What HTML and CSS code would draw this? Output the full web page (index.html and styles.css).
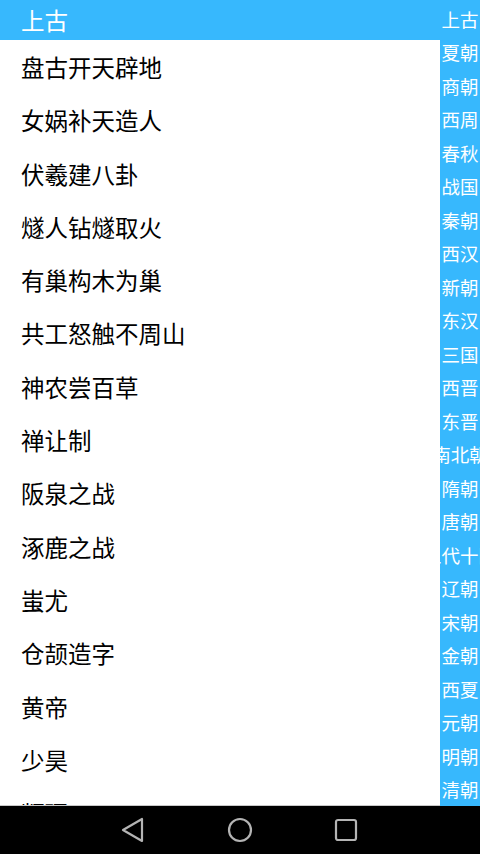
FILE: index.html
```html
<!DOCTYPE html>
<html lang="zh-CN">
<head>
<meta charset="utf-8">
<link rel="stylesheet" href="styles.css">
</head>
<body>
<div class="screen">
  <div class="app">
    <div class="main">
      <div class="header">上古</div>
      <div class="list">
        <div class="row">盘古开天辟地</div>
        <div class="row">女娲补天造人</div>
        <div class="row">伏羲建八卦</div>
        <div class="row">燧人钻燧取火</div>
        <div class="row">有巢构木为巢</div>
        <div class="row">共工怒触不周山</div>
        <div class="row">神农尝百草</div>
        <div class="row">禅让制</div>
        <div class="row">阪泉之战</div>
        <div class="row">涿鹿之战</div>
        <div class="row">蚩尤</div>
        <div class="row">仓颉造字</div>
        <div class="row">黄帝</div>
        <div class="row">少昊</div>
        <div class="row">颛顼</div>
      </div>
    </div>
    <div class="side">
      <div class="item">上古</div>
      <div class="item">夏朝</div>
      <div class="item">商朝</div>
      <div class="item">西周</div>
      <div class="item">春秋</div>
      <div class="item">战国</div>
      <div class="item">秦朝</div>
      <div class="item">西汉</div>
      <div class="item">新朝</div>
      <div class="item">东汉</div>
      <div class="item">三国</div>
      <div class="item">西晋</div>
      <div class="item">东晋</div>
      <div class="item">南北朝</div>
      <div class="item">隋朝</div>
      <div class="item">唐朝</div>
      <div class="item">五代十国</div>
      <div class="item">辽朝</div>
      <div class="item">宋朝</div>
      <div class="item">金朝</div>
      <div class="item">西夏</div>
      <div class="item">元朝</div>
      <div class="item">明朝</div>
      <div class="item">清朝</div>
    </div>
  </div>
  <div class="navbar">
    <svg class="nav-icon back" width="24" height="26" viewBox="0 0 24 26"><path d="M2 13 L21 2 L21 24 Z" fill="none" stroke="#b4b4b4" stroke-width="2.2" stroke-linejoin="round"/></svg>
    <svg class="nav-icon home" width="26" height="26" viewBox="0 0 26 26"><circle cx="13" cy="13" r="11" fill="none" stroke="#b4b4b4" stroke-width="2.2"/></svg>
    <svg class="nav-icon recent" width="24" height="24" viewBox="0 0 24 24"><rect x="2" y="2" width="20" height="20" rx="2" fill="none" stroke="#b4b4b4" stroke-width="2.2"/></svg>
  </div>
</div>
</body>
</html>
```
FILE: styles.css
```css
html, body {
  margin: 0;
  padding: 0;
  background: #ffffff;
}
body {
  font-family: "Noto Sans CJK SC", "Noto Sans", sans-serif;
}
.screen {
  width: 480px;
  height: 854px;
  display: flex;
  flex-direction: column;
  overflow: hidden;
}
.app {
  height: 806px;
  display: flex;
  flex-direction: row;
  overflow: hidden;
}
.main {
  flex: 1;
  display: flex;
  flex-direction: column;
  min-width: 0;
}
.header {
  height: 40px;
  flex: none;
  background: #37b8fd;
  color: #ffffff;
  font-size: 23.5px;
  line-height: 40px;
  padding-left: 21px;
}
.list {
  flex: 1;
  overflow: hidden;
  background: #ffffff;
  border-bottom: 1px solid #c8c8c8;
}
.row {
  height: 53.3px;
  line-height: 55px;
  padding-left: 21px;
  font-size: 23.5px;
  color: #000000;
  white-space: nowrap;
}
.side {
  width: 40px;
  flex: none;
  background: #37b8fd;
  display: flex;
  flex-direction: column;
  padding-top: 2px;
  overflow: hidden;
}
.item {
  flex: 1;
  display: flex;
  align-items: center;
  justify-content: center;
  color: #ffffff;
  font-size: 18.5px;
  white-space: nowrap;
}
.navbar {
  height: 48px;
  flex: none;
  background: #000000;
  display: flex;
  align-items: center;
  padding-left: 121px;
}
.home { margin-left: 82px; }
.recent { margin-left: 81px; }
```
